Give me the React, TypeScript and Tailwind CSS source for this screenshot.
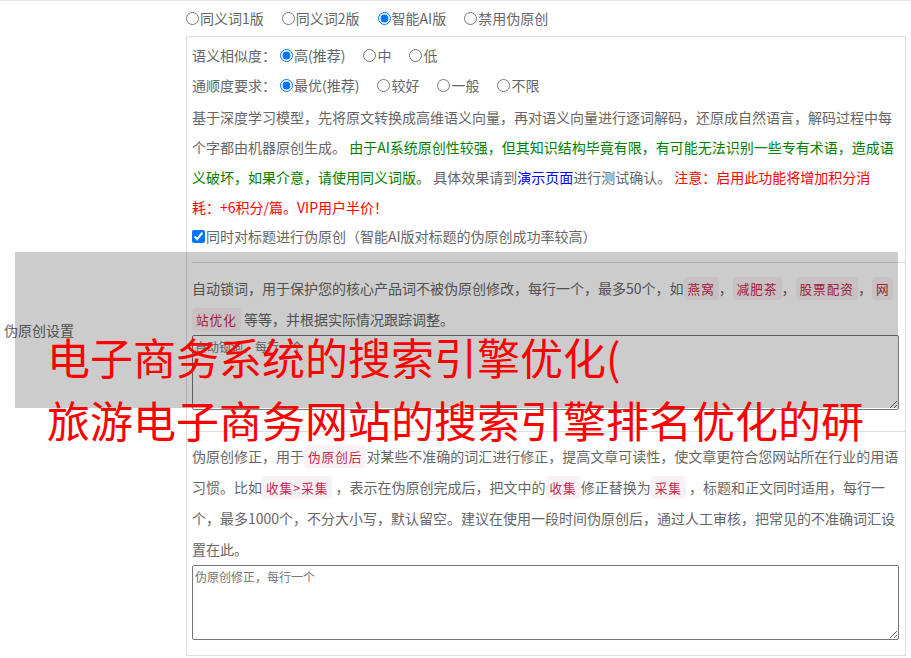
import type { ReactNode } from "react"

function Radio({ name, label, checked }: { name: string; label: string; checked?: boolean }) {
  return (
    <label className="mr-[18px] inline-flex items-center">
      <input type="radio" name={name} defaultChecked={checked} className="m-0 mr-px h-[13px] w-[13px]" />
      {label}
    </label>
  )
}

function Tag({ children }: { children: ReactNode }) {
  return (
    <code className="rounded-[4px] bg-[#f9f2f4] px-1 py-0.5 font-['Noto_Sans_CJK_SC',sans-serif] text-[12.6px] tracking-[1px] text-[#c7254e]">
      {children}
    </code>
  )
}

export default function App() {
  return (
    <div className="relative min-h-[658px] border-t border-[#e5e5e5] bg-white font-['Noto_Sans_CJK_SC',sans-serif] text-[14px] text-[#666]">
      <div className="flex">
        {/* 左侧标题 */}
        <div className="flex w-[182px] shrink-0 items-center pl-1">伪原创设置</div>

        <div className="pt-[3px] pb-[3px] pl-1">
          <div className="flex h-[29px] items-center">
            <Radio name="mode" label="同义词1版" />
            <Radio name="mode" label="同义词2版" />
            <Radio name="mode" label="智能AI版" checked />
            <Radio name="mode" label="禁用伪原创" />
          </div>

          <div className="mt-[3px] w-[720px] border border-[#ddd] pt-[3px] pb-[15px] pl-[5px]">
            <div className="flex h-[30px] items-center">
              <span className="mr-[4px]">语义相似度：</span>
              <Radio name="sim" label="高(推荐)" checked />
              <Radio name="sim" label="中" />
              <Radio name="sim" label="低" />
            </div>
            <div className="flex h-[30px] items-center">
              <span className="mr-[4px]">通顺度要求：</span>
              <Radio name="flu" label="最优(推荐)" checked />
              <Radio name="flu" label="较好" />
              <Radio name="flu" label="一般" />
              <Radio name="flu" label="不限" />
            </div>

            <p className="mt-[2px] leading-[30px]">
              基于深度学习模型，先将原文转换成高维语义向量，再对语义向量进行逐词解码，还原成自然语言，解码过程中每个字都由机器原创生成。{" "}
              <span className="text-[#008000]">
                由于AI系统原创性较强，但其知识结构毕竟有限，有可能无法识别一些专有术语，造成语义破坏，如果介意，请使用同义词版。
              </span>{" "}
              具体效果请到<a className="text-[#0000ff]">演示页面</a>进行测试确认。{" "}
              <span className="text-[#ff0000]">
                注意：启用此功能将增加积分消<span className="whitespace-nowrap">耗：+6</span>积分/篇。VIP用户半价！
              </span>
            </p>

            <label className="flex h-[28px] items-center">
              <input type="checkbox" defaultChecked className="m-0 mr-px h-[13px] w-[13px]" />
              同时对标题进行伪原创（智能AI版对标题的伪原创成功率较高）
            </label>

            <div className="mt-[12px] border-t border-[#ddd]" />

            <p className="mt-[10px] leading-[31px]">
              自动锁词，用于保护您的核心产品词不被伪原创修改，每行一个，最多50个，如<Tag>燕窝</Tag>，<Tag>减肥茶</Tag>，
              <Tag>股票配资</Tag>，<Tag>网</Tag>
              <br />
              <Tag>站优化</Tag> 等等，并根据实际情况跟踪调整。
            </p>
            <textarea
              placeholder="自动锁词，每行一个"
              className="block h-[75px] w-[707px] rounded-[2px] border border-[#767676] px-[2px] py-[2px] text-[12px] placeholder:text-[#757575]"
            />

            <div className="mt-[21px] border-t border-[#ddd]" />

            <p className="mt-[9px] leading-[31px]">
              伪原创修正，用于<Tag>伪原创后</Tag>对某些不准确的词汇进行修正，提高文章可读性，使文章更符合您网站所在行业的用语习惯。比如<Tag>收集&gt;采集</Tag> ，表示在伪原创完成后，把文中的<Tag>收集</Tag>修正替换为<Tag>采集</Tag> ，标题和正文同时适用，每行一个，最多1000个，不分大小写，默认留空。建议在使用一段时间伪原创后，通过人工审核，把常见的不准确词汇设置在此。
            </p>
            <textarea
              placeholder="伪原创修正，每行一个"
              className="block h-[75px] w-[707px] rounded-[2px] border border-[#767676] px-[2px] py-[2px] text-[12px] placeholder:text-[#757575]"
            />
          </div>
        </div>
      </div>

      {/* 遮罩 */}
      <div className="absolute top-[251px] left-[15px] h-[156px] w-[883px] bg-black/20" />
      <div className="absolute top-[324px] left-[47px] text-[43px] leading-[63px] whitespace-nowrap text-[#ff0000]">
        <div>电子商务系统的搜索引擎优化(</div>
        <div>旅游电子商务网站的搜索引擎排名优化的研</div>
      </div>
    </div>
  )
}
